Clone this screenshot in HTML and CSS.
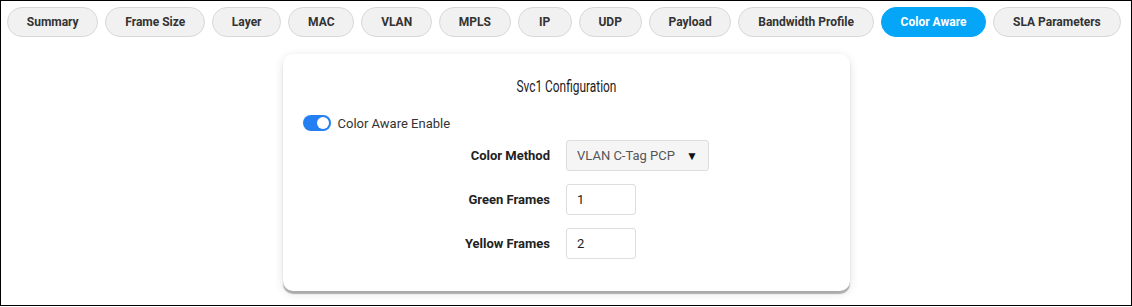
FILE: index.html
```html
<!DOCTYPE html>
<html lang="en">
<head>
  <meta charset="UTF-8"/>
  <title>Color Aware</title>
  <link rel="stylesheet" href="styles.css">
</head>
<body>

<div class="frame">
  <div class="tabs">
    <button class="tab">Summary</button>
    <button class="tab">Frame Size</button>
    <button class="tab">Layer</button>
    <button class="tab">MAC</button>
    <button class="tab">VLAN</button>
    <button class="tab">MPLS</button>
    <button class="tab">IP</button>
    <button class="tab">UDP</button>
    <button class="tab">Payload</button>
    <button class="tab">Bandwidth Profile</button>
    <button class="tab active">Color Aware</button>
    <button class="tab">SLA Parameters</button>
  </div>

  <div class="card">
    <h2 class="card-title"><span>Svc1 Configuration</span></h2>

    <label class="toggle-row">
      <span class="toggle"><span class="knob"></span></span>
      Color Aware Enable
    </label>

    <div class="form-grid">
      <div class="form-label">Color Method</div>
      <div class="form-field">
        <div class="select">VLAN C-Tag PCP <span class="arrow">&#9660;</span></div>
      </div>

      <div class="form-label">Green Frames</div>
      <div class="form-field"><input class="num-input" type="text" value="1"></div>

      <div class="form-label">Yellow Frames</div>
      <div class="form-field"><input class="num-input" type="text" value="2"></div>
    </div>
  </div>
</div>

</body>
</html>
```

FILE: styles.css
```css
body {
  margin: 0;
  font-family: Roboto, 'Liberation Sans', sans-serif;
  background-color: white;
}

.frame {
  width: 1132px;
  height: 306px;
  box-sizing: border-box;
  border: 1px solid #000;
  padding: 6px 6px 0 6px;
}

.tabs {
  display: flex;
  gap: 7px;
}

.tab {
  flex-shrink: 0;
  height: 30px;
  min-width: 54px;
  padding: 0 18.8px;
  border: 1px solid #d8d8d8;
  border-radius: 15px;
  background-color: #f1f1f1;
  color: #333;
  font-family: Roboto, 'Liberation Sans', sans-serif;
  font-size: 12px;
  font-weight: bold;
  white-space: nowrap;
  cursor: pointer;
}

.tab.active {
  background-color: #05a6f8;
  border-color: #05a6f8;
  color: white;
}

.card {
  width: 567px;
  margin: 17px auto 0;
  box-sizing: border-box;
  padding: 22px 20px 32px;
  background-color: white;
  border-radius: 10px;
  box-shadow: 0 3px 1px rgba(0,0,0,0.28), 0 2px 10px rgba(0,0,0,0.12);
}

.card-title {
  margin: 0 0 19px;
  text-align: center;
  font-size: 17px;
  line-height: 20px;
  font-weight: normal;
  color: #1a1a1a;
}

.card-title span {
  display: inline-block;
  transform: scaleX(0.7);
}

.toggle-row {
  display: flex;
  align-items: center;
  gap: 7px;
  font-size: 13px;
  color: #333;
}

.toggle {
  width: 28px;
  height: 16px;
  border-radius: 8px;
  background-color: #237ff2;
  position: relative;
}

.knob {
  position: absolute;
  top: 2px;
  right: 2px;
  width: 12px;
  height: 12px;
  border-radius: 50%;
  background-color: white;
}

.form-grid {
  display: grid;
  grid-template-columns: 1fr 1fr;
  row-gap: 13px;
  align-items: center;
  margin-top: 9px;
}

.form-label {
  text-align: right;
  padding-right: 16px;
  font-size: 13px;
  font-weight: bold;
  color: #222;
}

.select {
  width: 143px;
  height: 31px;
  box-sizing: border-box;
  display: flex;
  align-items: center;
  justify-content: space-between;
  padding: 0 10px;
  background-color: #f5f5f5;
  border: 1px solid #ddd;
  border-radius: 3px;
  font-size: 13px;
  color: #555;
}

.arrow {
  color: #111;
  font-size: 12px;
}

.num-input {
  width: 70px;
  height: 31px;
  box-sizing: border-box;
  padding: 0 10px;
  border: 1px solid #ddd;
  border-radius: 3px;
  font-family: Roboto, 'Liberation Sans', sans-serif;
  font-size: 13px;
  color: #222;
}
```
